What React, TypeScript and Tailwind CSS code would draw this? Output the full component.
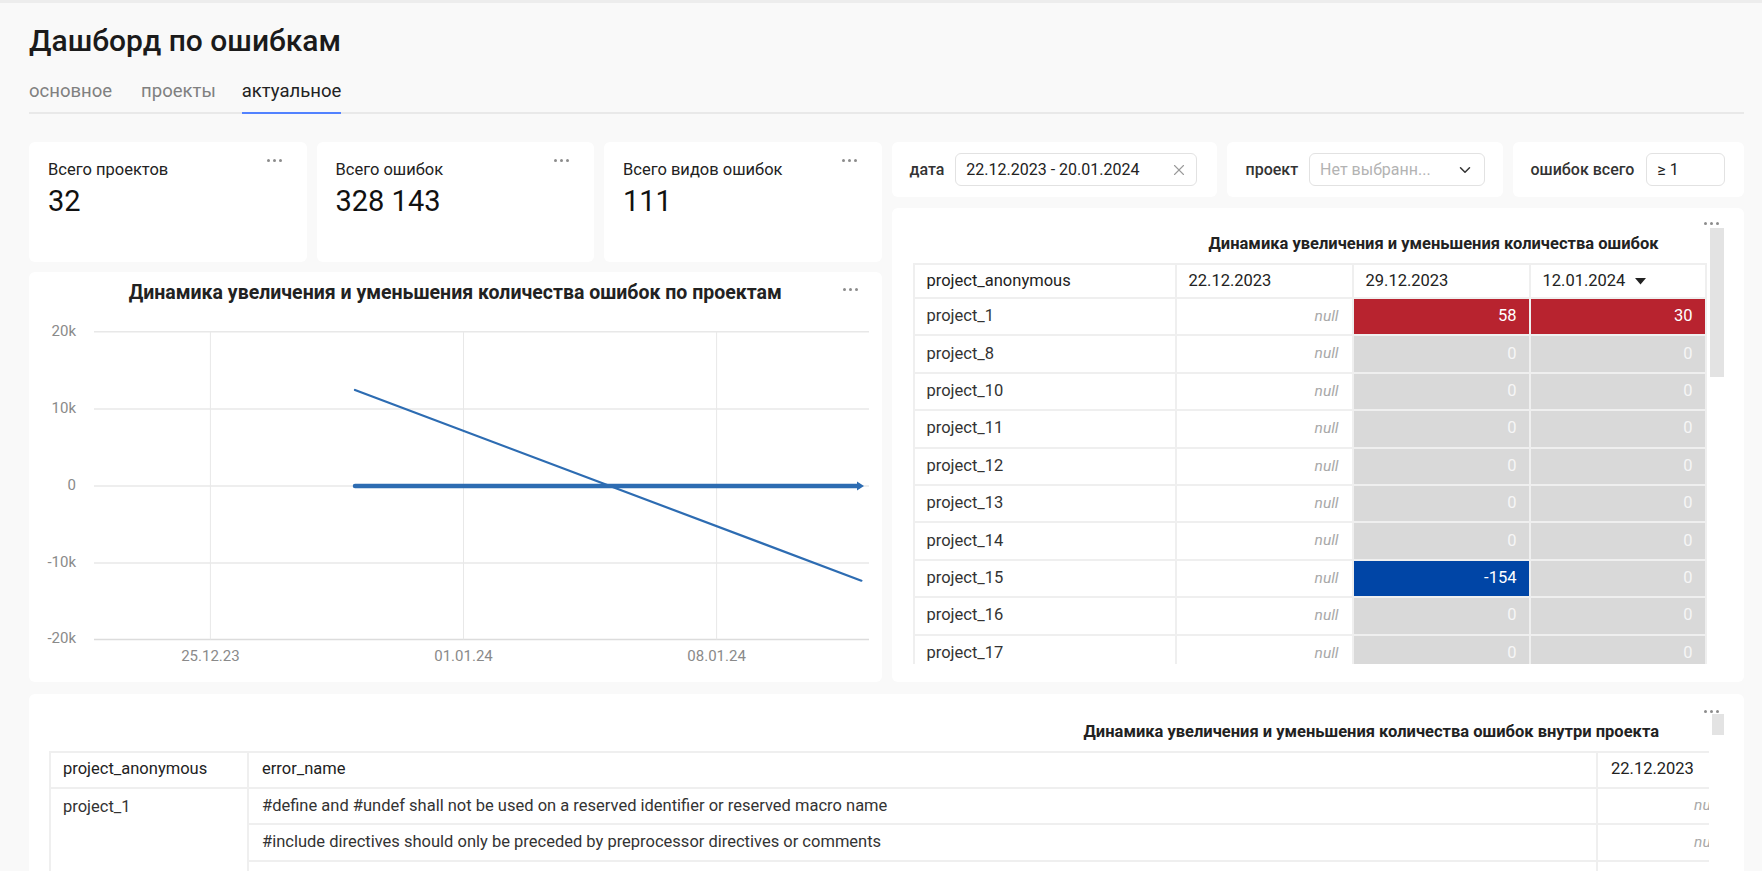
import { ChevronDown, X } from 'lucide-react';

type Kind = 'red' | 'blue' | 'zero';

interface ProjectRow {
    name: string;
    a: string;
    aKind: Kind;
    b: string;
    bKind: Kind;
}

const stats = [
    { label: 'Всего проектов', value: '32' },
    { label: 'Всего ошибок', value: '328 143' },
    { label: 'Всего видов ошибок', value: '111' },
];

const projectRows: ProjectRow[] = [
    { name: 'project_1', a: '58', aKind: 'red', b: '30', bKind: 'red' },
    { name: 'project_8', a: '0', aKind: 'zero', b: '0', bKind: 'zero' },
    { name: 'project_10', a: '0', aKind: 'zero', b: '0', bKind: 'zero' },
    { name: 'project_11', a: '0', aKind: 'zero', b: '0', bKind: 'zero' },
    { name: 'project_12', a: '0', aKind: 'zero', b: '0', bKind: 'zero' },
    { name: 'project_13', a: '0', aKind: 'zero', b: '0', bKind: 'zero' },
    { name: 'project_14', a: '0', aKind: 'zero', b: '0', bKind: 'zero' },
    { name: 'project_15', a: '-154', aKind: 'blue', b: '0', bKind: 'zero' },
    { name: 'project_16', a: '0', aKind: 'zero', b: '0', bKind: 'zero' },
    { name: 'project_17', a: '0', aKind: 'zero', b: '0', bKind: 'zero' },
];

const kindClass: Record<Kind, string> = {
    red: 'bg-[#b8232f] text-white',
    blue: 'bg-[#0045a6] text-white',
    zero: 'bg-[#d9d9d9] text-[#f6f6f6]',
};

const errorRows = [
    '#define and #undef shall not be used on a reserved identifier or reserved macro name',
    '#include directives should only be preceded by preprocessor directives or comments',
    '',
    '',
];

function Dots() {
    return (
        <div className="flex items-center gap-[3px]">
            <span className="block w-[3px] h-[3px] rounded-full bg-[#8c8c8c]" />
            <span className="block w-[3px] h-[3px] rounded-full bg-[#8c8c8c]" />
            <span className="block w-[3px] h-[3px] rounded-full bg-[#8c8c8c]" />
        </div>
    );
}

function StatCard({ label, value }: { label: string; value: string }) {
    return (
        <div className="bg-white rounded-[6px] h-[120px] pl-[19px] pr-[25px] pt-[17px] flex items-start justify-between">
            <div>
                <div className="text-[16.5px] leading-[22px] text-[#222]">{label}</div>
                <div className="mt-[3px] text-[29px] leading-[34px] text-[#111]">{value}</div>
            </div>
            <div className="pt-[0px]">
                <Dots />
            </div>
        </div>
    );
}

function Chart() {
    const ys = [59.7, 136.9, 214, 291, 367.4];
    const yLabels = ['20k', '10k', '0', '-10k', '-20k'];
    const xs = [181.4, 434.5, 687.6];
    const xLabels = ['25.12.23', '01.01.24', '08.01.24'];

    return (
        <svg width="853" height="368" viewBox="0 42 853 368" className="block">
            {ys.map((y, i) => (
                <line key={'h' + i} x1={65} x2={840} y1={y} y2={y} stroke={i === 4 ? '#dcdcdc' : '#e8e8e8'} strokeWidth={1.5} />
            ))}
            {xs.map((x, i) => (
                <line key={'v' + i} x1={x} x2={x} y1={59.7} y2={367.4} stroke="#e8e8e8" strokeWidth={1} />
            ))}
            {ys.map((y, i) => (
                <text key={'yl' + i} x={47} y={y} textAnchor="end" dominantBaseline="middle" fontSize={15} fill="#8a8a8a">
                    {yLabels[i]}
                </text>
            ))}
            {xs.map((x, i) => (
                <text key={'xl' + i} x={x} y={385} textAnchor="middle" dominantBaseline="middle" fontSize={15} fill="#8a8a8a">
                    {xLabels[i]}
                </text>
            ))}
            <line x1={326} y1={118} x2={832.4} y2={308.7} stroke="#2d6cb2" strokeWidth={2.2} strokeLinecap="round" />
            <line x1={326} y1={214} x2={830} y2={214} stroke="#2d6cb2" strokeWidth={4.5} strokeLinecap="round" />
            <polygon points="828,209.5 835,214 828,218.5" fill="#2d6cb2" />
        </svg>
    );
}

export default function App() {
    return (
        <div className="min-h-screen bg-[#f9f9f9] border-t-[3px] border-[#ededed] pl-[29px] pr-[18px] pb-[40px] font-['Roboto',sans-serif]">
            <h1 className="pt-[20px] text-[30px] leading-[36px] font-medium text-[#1b1b1b]">Дашборд по ошибкам</h1>

            <div className="mt-[20px] flex border-b-2 border-[#e9e9e9] text-[18.5px] leading-[24px]">
                <div className="pb-[9px] mr-[29px] text-[#808080]">основное</div>
                <div className="pb-[9px] mr-[26px] text-[#808080]">проекты</div>
                <div className="pb-[9px] -mb-[2px] border-b-2 border-[#5282ff] text-[#222]">актуальное</div>
            </div>

            <div className="mt-[28px] grid grid-cols-2 gap-x-[10px]">
                {/* left column */}
                <div className="flex flex-col gap-[10px]">
                    <div className="grid grid-cols-3 gap-[10px]">
                        {stats.map((s) => (
                            <StatCard key={s.label} label={s.label} value={s.value} />
                        ))}
                    </div>
                    <div className="relative bg-white rounded-[6px] h-[410px]">
                        <div className="absolute right-[24px] top-[16px]">
                            <Dots />
                        </div>
                        <div className="h-[42px] flex items-center justify-center text-[19.5px] font-bold text-[#222]">
                            Динамика увеличения и уменьшения количества ошибок по проектам
                        </div>
                        <Chart />
                    </div>
                </div>

                {/* right column */}
                <div className="flex flex-col gap-[11px]">
                    <div className="grid grid-cols-[325px_276px_1fr] gap-[10px] text-[16px]">
                        <div className="bg-white rounded-[6px] h-[55px] flex items-center pl-[18px] pr-[20px] gap-[11px]">
                            <span className="font-medium text-[#333]">дата</span>
                            <div className="flex-1 h-[33px] border border-[#e2e2e2] rounded-[6px] flex items-center justify-between pl-[10px] pr-[8px] text-[#222]">
                                <span>22.12.2023 - 20.01.2024</span>
                                <X size={18} strokeWidth={1.5} color="#9a9a9a" />
                            </div>
                        </div>
                        <div className="bg-white rounded-[6px] h-[55px] flex items-center pl-[19px] pr-[18px] gap-[11px]">
                            <span className="font-medium text-[#333]">проект</span>
                            <div className="flex-1 h-[33px] border border-[#e2e2e2] rounded-[6px] flex items-center justify-between pl-[10px] pr-[10px]">
                                <span className="text-[#b3b3b3]">Нет выбранн...</span>
                                <ChevronDown size={18} strokeWidth={2} color="#333" />
                            </div>
                        </div>
                        <div className="bg-white rounded-[6px] h-[55px] flex items-center pl-[18px] pr-[19px] gap-[12px]">
                            <span className="font-medium text-[#333]">ошибок всего</span>
                            <div className="flex-1 h-[33px] border border-[#e2e2e2] rounded-[6px] flex items-center pl-[10px] text-[#222]">
                                ≥ 1
                            </div>
                        </div>
                    </div>

                    <div className="relative bg-white rounded-[6px] h-[474px] pl-[21px] pr-[20px] pt-[18px] flex">
                        <div className="absolute right-[25px] top-[14px]">
                            <Dots />
                        </div>
                        <div className="w-[794px] flex flex-col">
                            <div className="h-[37px] flex items-center justify-end pr-[48px] text-[16.5px] font-bold text-[#222]">
                                Динамика увеличения и уменьшения количества ошибок
                            </div>
                            <div className="h-[401px] overflow-hidden">
                                <div className="border-t-2 border-l-2 border-[#efefef] grid grid-cols-[262px_177px_177px_176px] text-[16.5px]">
                                    <div className="h-[34px] border-r-2 border-b-2 border-[#efefef] flex items-center px-[12px] text-[#222]">project_anonymous</div>
                                    <div className="h-[34px] border-r-2 border-b-2 border-[#efefef] flex items-center px-[12px] text-[#222]">22.12.2023</div>
                                    <div className="h-[34px] border-r-2 border-b-2 border-[#efefef] flex items-center px-[12px] text-[#222]">29.12.2023</div>
                                    <div className="h-[34px] border-r-2 border-b-2 border-[#efefef] flex items-center gap-[10px] px-[12px] text-[#222]">
                                        12.01.2024
                                        <svg width="11" height="7" viewBox="0 0 11 7">
                                            <polygon points="0,0 11,0 5.5,6.5" fill="#222" />
                                        </svg>
                                    </div>
                                    {projectRows.map((r) => (
                                        <div key={r.name} className="contents">
                                            <div className="h-[37.4px] border-r-2 border-b-2 border-[#efefef] flex items-center px-[12px] text-[#333]">{r.name}</div>
                                            <div className="h-[37.4px] border-r-2 border-b-2 border-[#efefef] flex items-center justify-end px-[13px] italic text-[15.5px] text-[#a9a9a9]">null</div>
                                            <div className={'h-[37.4px] border-r-2 border-b-2 border-[#efefef] flex items-center justify-end px-[12px] ' + kindClass[r.aKind]}>{r.a}</div>
                                            <div className={'h-[37.4px] border-r-2 border-b-2 border-[#efefef] flex items-center justify-end px-[12px] ' + kindClass[r.bKind]}>{r.b}</div>
                                        </div>
                                    ))}
                                </div>
                            </div>
                        </div>
                        <div className="ml-[3px] mt-[2px] w-[14px] h-[149px] bg-[#e3e3e3]" />
                    </div>
                </div>
            </div>

            {/* bottom table */}
            <div className="relative mt-[12px] bg-white rounded-[6px] pt-[19px] pl-[20px] pr-[20px] pb-[40px] flex">
                <div className="absolute right-[25px] top-[16px]">
                    <Dots />
                </div>
                <div className="w-[1660px] overflow-hidden">
                    <div className="h-[38px] flex items-center justify-end pr-[50px] text-[16.5px] font-bold text-[#222]">
                        Динамика увеличения и уменьшения количества ошибок внутри проекта
                    </div>
                    <div className="w-[1684px] flex border-t-2 border-l-2 border-[#efefef] text-[16.5px]">
                        <div className="w-[198px] shrink-0 flex flex-col border-r-2 border-[#efefef]">
                            <div className="h-[35.7px] border-b-2 border-[#efefef] flex items-center px-[12px] text-[#222]">project_anonymous</div>
                            <div className="h-[36.7px] flex items-center px-[12px] text-[#333]">project_1</div>
                        </div>
                        <div className="grid grid-cols-[1349px_135px]">
                            <div className="h-[35.7px] border-r-2 border-b-2 border-[#efefef] flex items-center px-[13px] text-[#222]">error_name</div>
                            <div className="h-[35.7px] border-r-2 border-b-2 border-[#efefef] flex items-center px-[13px] text-[#222]">22.12.2023</div>
                            {errorRows.map((e, i) => (
                                <div key={i} className="contents">
                                    <div className="h-[36.7px] border-r-2 border-b-2 border-[#efefef] flex items-center px-[13px] text-[#333] whitespace-nowrap">{e}</div>
                                    <div className="h-[36.7px] border-r-2 border-b-2 border-[#efefef] flex items-center justify-end px-[13px] italic text-[15.5px] text-[#a9a9a9]">{e ? 'null' : ''}</div>
                                </div>
                            ))}
                        </div>
                    </div>
                </div>
                <div className="ml-[3px] mt-[1px] w-[12px] h-[21px] bg-[#e3e3e3]" />
            </div>
        </div>
    );
}
